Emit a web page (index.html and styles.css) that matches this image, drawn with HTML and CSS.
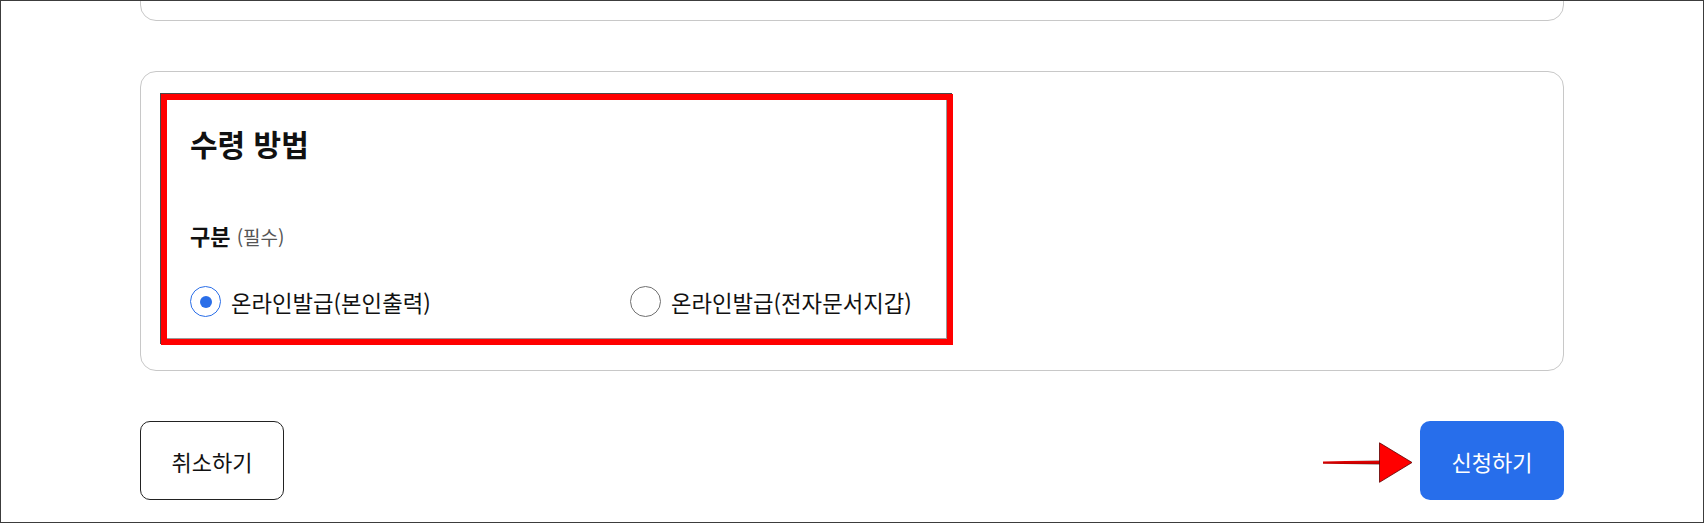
FILE: index.html
```html
<!DOCTYPE html>
<html lang="ko">
<head>
<meta charset="utf-8">
<title>수령 방법</title>
<link rel="stylesheet" href="styles.css">
</head>
<body>
<div class="frame">
  <div class="wrap">
    <div class="card card-top"></div>
    <section class="card card-main">
      <h2 class="title">수령 방법</h2>
      <div class="field-label"><strong>구분</strong> <span class="hint">(필수)</span></div>
      <div class="options">
        <label class="opt"><span class="radio checked"></span><span>온라인발급(본인출력)</span></label>
        <label class="opt"><span class="radio"></span><span>온라인발급(전자문서지갑)</span></label>
      </div>
      <div class="highlight"></div>
    </section>
    <div class="actions">
      <button class="btn btn-cancel">취소하기</button>
      <div class="submit-wrap">
        <svg class="arrow" width="90" height="41" viewBox="0 0 90 41">
          <defs>
            <linearGradient id="shaft" x1="0" y1="0" x2="0" y2="1">
              <stop offset="0" stop-color="#9a9a9a"/>
              <stop offset="0.3" stop-color="#e00000"/>
              <stop offset="0.75" stop-color="#c00000"/>
              <stop offset="1" stop-color="#555"/>
            </linearGradient>
          </defs>
          <polygon points="0,19.5 57,18.2 57,22.6 0,21.8" fill="url(#shaft)"/>
          <polygon points="56.5,0.8 89,20.5 56.5,40.3" fill="#ff0000" stroke="#5a0000" stroke-width="0.8" stroke-linejoin="miter"/>
        </svg>
        <button class="btn btn-primary">신청하기</button>
      </div>
    </div>
  </div>
</div>
</body>
</html>
```

FILE: styles.css
```css
* { box-sizing: border-box; }
html, body { margin: 0; padding: 0; background: #fff; }
body {
  font-family: "Noto Sans CJK KR", "Noto Sans", sans-serif;
  color: #111;
}
.frame {
  width: 1704px;
  height: 523px;
  border: 1px solid #3c3c3c;
  overflow: hidden;
  background: #fff;
}
.wrap {
  width: 1424px;
  margin: 0 auto;
}
.card {
  border: 1px solid #c8c8c8;
  border-radius: 16px;
  background: #fff;
}
.card-top {
  height: 60px;
  margin-top: -40px;
}
.card-main {
  position: relative;
  margin-top: 50px;
  height: 300px;
  padding: 51px 49px 0 49px;
}
.title {
  margin: 0;
  font-size: 30px;
  line-height: 40px;
  font-weight: 700;
  color: #111;
}
.field-label {
  margin-top: 58px;
  font-size: 22px;
  line-height: 28px;
}
.field-label strong { font-weight: 700; }
.hint {
  font-size: 19px;
  color: #555;
}
.options {
  margin-top: 35px;
  display: grid;
  grid-template-columns: 440px 1fr;
}
.opt {
  display: flex;
  align-items: center;
  gap: 10px;
  font-size: 22.3px;
  line-height: 30px;
  color: #111;
}
.radio {
  width: 31px;
  height: 31px;
  border-radius: 50%;
  border: 1.5px solid #707070;
  background: #fff;
  display: flex;
  align-items: center;
  justify-content: center;
  flex: none;
}
.radio.checked {
  border-color: #2a6ee8;
}
.radio.checked::after {
  content: "";
  width: 12px;
  height: 12px;
  border-radius: 50%;
  background: #2a6ee8;
}
.highlight {
  position: absolute;
  left: 20px;
  top: 22px;
  width: 792px;
  height: 251px;
  border: 6px solid #ff0000;
  box-shadow: -1px -1px 0 #4a4a4a, inset -1px -1px 0 #9a9a9a;
  pointer-events: none;
}
.actions {
  margin-top: 50px;
  display: flex;
  justify-content: space-between;
  align-items: flex-start;
}
.btn {
  width: 144px;
  height: 79px;
  border-radius: 10px;
  font-family: "Noto Sans CJK KR", "Noto Sans", sans-serif;
  font-size: 22px;
  padding: 0;
  cursor: pointer;
}
.btn-cancel {
  background: #fff;
  border: 1px solid #222;
  color: #111;
}
.btn-primary {
  background: #276eeb;
  border: none;
  color: #fff;
}
.submit-wrap {
  position: relative;
}
.arrow {
  position: absolute;
  right: calc(100% + 7px);
  top: 21px;
  display: block;
}
```
